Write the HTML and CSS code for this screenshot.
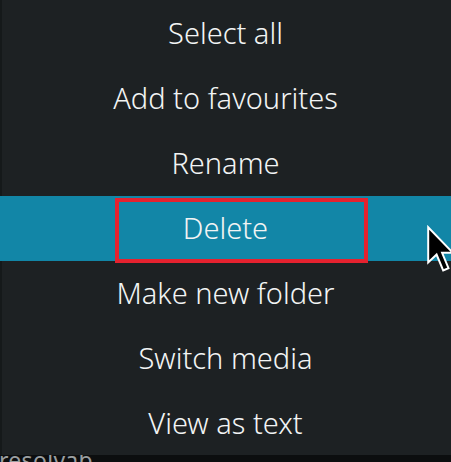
FILE: index.html
```html
<!DOCTYPE html>
<html>
<head>
<meta charset="utf-8">
<link rel="stylesheet" href="styles.css">
</head>
<body>
<div class="screen">
  <div class="menu">
    <div class="item">Select all</div>
    <div class="item">Add to favourites</div>
    <div class="item">Rename</div>
    <div class="item active">Delete<span class="highlight-box"></span></div>
    <div class="item">Make new folder</div>
    <div class="item">Switch media</div>
    <div class="item">View as text</div>
  </div>
  <div class="below"><span>resolvab</span></div>
  <svg class="cursor" width="28" height="49" viewBox="0 0 12.7 22.2">
    <path d="M1 1 L1 17 L4.8 13.4 L7.8 20.6 L10.2 19.6 L7.3 12.6 L12.2 12.6 Z" fill="#000" stroke="#fff" stroke-width="0.9" stroke-linejoin="miter"/>
  </svg>
</div>
</body>
</html>
```
FILE: styles.css
```css
html, body {
  margin: 0;
  padding: 0;
  background: #0c0e0f;
}
.screen {
  position: relative;
  width: 451px;
  height: 462px;
  overflow: hidden;
  background: #0c0e0f;
}
.menu {
  display: flex;
  flex-direction: column;
  padding-top: 1px;
  height: 454px;
  overflow: hidden;
  background: linear-gradient(to right, #15191a 2px, #1d2123 2px);
}
.item {
  position: relative;
  box-sizing: border-box;
  flex: none;
  height: 65px;
  padding-bottom: 3px;
  display: flex;
  align-items: center;
  justify-content: center;
  font-family: "Noto Sans", "Open Sans", sans-serif;
  font-weight: 300;
  font-size: 29px;
  color: #f2f4f4;
}
.item.active {
  background: #1286a7;
}
.highlight-box {
  position: absolute;
  box-sizing: border-box;
  left: 115px;
  top: 2px;
  width: 253px;
  height: 65px;
  border: 4px solid #e5222f;
}
.below {
  height: 7px;
  overflow: hidden;
  font-family: "Noto Sans", sans-serif;
  font-size: 23px;
  color: #9a9ea0;
  line-height: 28px;
}
.below span {
  display: block;
  margin-top: -9px;
  margin-left: -1px;
  letter-spacing: 0.3px;
}
.cursor {
  position: absolute;
  left: 426px;
  top: 225px;
}
```
